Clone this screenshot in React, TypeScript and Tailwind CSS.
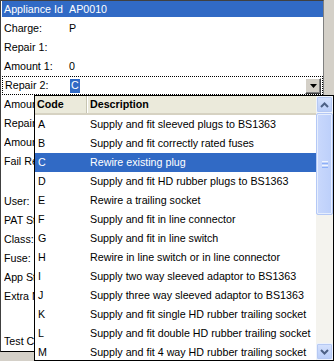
import React from "react";

const items: [string, string][] = [
  ["A", "Supply and fit sleeved plugs to BS1363"],
  ["B", "Supply and fit correctly rated fuses"],
  ["C", "Rewire existing plug"],
  ["D", "Supply and fit HD rubber plugs to BS1363"],
  ["E", "Rewire a trailing socket"],
  ["F", "Supply and fit in line connector"],
  ["G", "Supply and fit in line switch"],
  ["H", "Rewire in line switch or in line connector"],
  ["I", "Supply two way sleeved adaptor to BS1363"],
  ["J", "Supply three way sleeved adaptor to BS1363"],
  ["K", "Supply and fit single HD rubber trailing socket"],
  ["L", "Supply and fit double HD rubber trailing socket"],
  ["M", "Supply and fit 4 way HD rubber trailing socket"],
];

function Row({ label, value, h = "h-[19px]" }: { label: string; value?: string; h?: string }) {
  return (
    <div className={`flex items-start ${h}`}>
      <div className="flex h-[19px] items-center pl-[3px]">
        <span className="w-[65px] whitespace-nowrap">{label}</span>
        {value !== undefined && <span>{value}</span>}
      </div>
    </div>
  );
}

function HiddenRow({ label, h = "h-[19px]" }: { label: string; h?: string }) {
  return (
    <div className={`flex items-start ${h}`}>
      <div className="flex h-[19px] items-center pl-[3px]">
        <span className="block w-[30px] overflow-hidden whitespace-nowrap">{label}</span>
      </div>
    </div>
  );
}

function Chevron({ up }: { up: boolean }) {
  return (
    <svg width="9" height="6" viewBox="0 0 9 6">
      <path
        d={up ? "M1 5 L4.5 1.5 L8 5" : "M1 1 L4.5 4.5 L8 1"}
        fill="none"
        stroke="#4d6185"
        strokeWidth="2"
      />
    </svg>
  );
}

function ScrollButton({ up }: { up: boolean }) {
  return (
    <div className="flex h-[17px] w-[17px] items-center justify-center rounded-[2px] border border-[#eef3fd] bg-gradient-to-b from-[#d6e2fd] to-[#b9cdf8] shadow-[inset_0_0_0_1px_#b6c9f3]">
      <Chevron up={up} />
    </div>
  );
}

export default function App() {
  return (
    <div className="relative h-[361px] w-[334px] overflow-hidden bg-[#d4d0c8] font-['Liberation_Sans',Arial,sans-serif] text-[10.7px] text-black">
      {/* main property panel */}
      <div className="flex h-[352px] w-[324px] flex-col border-l border-t border-r border-b border-l-[#404040] border-t-[#404040] border-r-[#808080] border-b-black border-b-dotted bg-white">
        <div className="h-[18px]">
          <div className="ml-[1px] flex h-[16px] items-center bg-[#316ac5] pl-[2px] text-white">
            <span className="w-[65px] whitespace-nowrap">Appliance Id</span>
            <span>AP0010</span>
          </div>
        </div>
        <Row label="Charge:" value="P" />
        <Row label="Repair 1:" value="" />
        <Row label="Amount 1:" value="0" />
        <div className="ml-[1px] flex h-[19px] items-center border border-dotted border-black pl-[2px]">
          <span className="w-[65px] whitespace-nowrap">Repair 2:</span>
          <span className="flex h-[14px] items-center bg-[#316ac5] px-[1px] text-white">C</span>
          <div className="flex-1" />
          <div className="mr-[1px] flex h-[16px] w-[16px] items-center justify-center border border-t-white border-l-white border-r-[#404040] border-b-[#404040] bg-[#d4d0c8] shadow-[inset_-1px_-1px_0_#808080]">
            <svg width="7" height="4" viewBox="0 0 7 4">
              <path d="M0 0 H7 L3.5 4 Z" fill="black" />
            </svg>
          </div>
        </div>
        <HiddenRow label="Amount 2:" />
        <HiddenRow label="Repair 3:" />
        <HiddenRow label="Amount 3:" />
        <HiddenRow label="Fail Reason:" h="h-[40px]" />
        <HiddenRow label="User:" />
        <HiddenRow label="PAT Status:" />
        <HiddenRow label="Class:" />
        <HiddenRow label="Fuse:" />
        <HiddenRow label="App Status:" />
        <HiddenRow label="Extra Notes:" h="h-[45px]" />
        <HiddenRow label="Test Comments:" />
      </div>

      {/* dropdown list popup */}
      <div className="absolute left-[34px] top-[95px] flex h-[266px] w-[300px] overflow-hidden border border-black bg-white">
        <div className="flex w-[281px] flex-col">
          <div className="flex h-[19px] shrink-0 items-stretch border-b-2 border-b-[#d6d2c2] bg-[#ebeadb] font-bold">
            <div className="flex w-[52px] items-center border-r border-r-[#c7c5b2] pl-[2px]">Code</div>
            <div className="flex w-[1px] bg-white" />
            <div className="flex flex-1 items-center pl-[2px]">Description</div>
          </div>
          {items.map(([code, desc]) => {
            const sel = code === "C";
            return (
              <div
                key={code}
                className={`flex h-[19px] shrink-0 items-center ${sel ? "bg-[#316ac5] text-white" : ""}`}
              >
                <span className="w-[55px] whitespace-nowrap pl-[3px]">{code}</span>
                <span className="whitespace-nowrap">{desc}</span>
              </div>
            );
          })}
        </div>
        {/* scrollbar */}
        <div className="flex w-[17px] flex-col bg-[#f4f3ee]">
          <ScrollButton up />
          <div className="flex h-[102px] w-[17px] items-center justify-center rounded-[2px] border border-[#b4c8f6] bg-gradient-to-r from-[#c9d8fc] to-[#bccffa] shadow-[inset_0_0_0_1px_#e6eefd]">
            <div className="flex flex-col gap-[1px]">
              <div className="h-[1px] w-[6px] bg-[#eef4fe]" />
              <div className="h-[1px] w-[6px] bg-[#8cb0f8]" />
              <div className="h-[1px] w-[6px] bg-[#eef4fe]" />
              <div className="h-[1px] w-[6px] bg-[#8cb0f8]" />
            </div>
          </div>
          <div className="flex-1" />
          <ScrollButton up={false} />
        </div>
      </div>
    </div>
  );
}
